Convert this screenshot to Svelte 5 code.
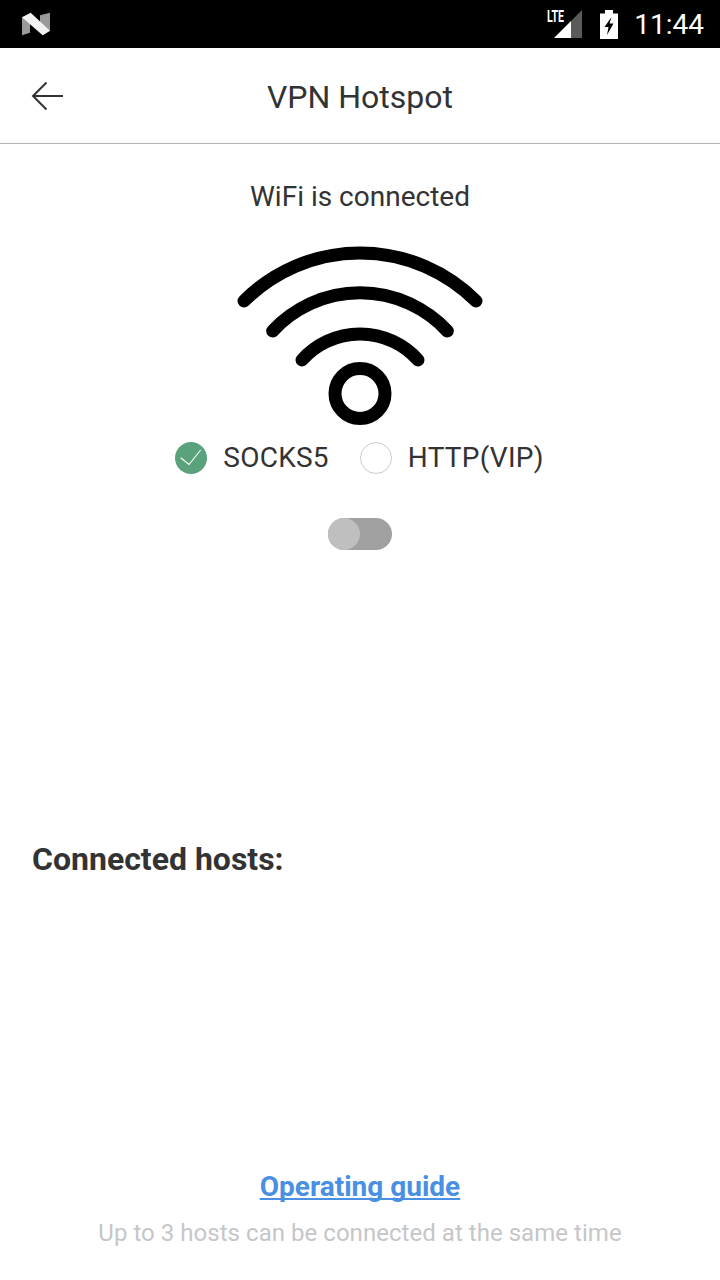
<script>
  let socks = $state(true);
</script>

<div class="page">
  <div class="status">
    <svg class="n" width="28" height="24" viewBox="66 36 84 72">
      <path d="M66 52 L90 44 L90 98 L66 106 Z" fill="#9a9a9a"/>
      <path d="M120 46 L150 38 L150 92 L128 106 L120 90 Z" fill="#9a9a9a"/>
      <path d="M66 52 L92 38 L150 92 L128 106 Z" fill="#f2f2f2"/>
    </svg>
    <div class="right">
      <svg class="sig" width="36" height="32" viewBox="0 0 36 32">
        <path d="M7 30 L24 13 L24 30 Z" fill="#fff"/>
        <path d="M24 13 L35 2 L35 30 L24 30 Z" fill="#5a5a5a"/>
        <text x="0" y="14" class="lte" textLength="17" lengthAdjust="spacingAndGlyphs">LTE</text>
      </svg>
      <svg class="bat" width="18" height="29" viewBox="0 0 18 29">
        <path d="M5 0 H13 V3.5 H18 V29 H0 V3.5 H5 Z" fill="#fff"/>
        <path d="M11.5 7 L4.5 17 H8.5 L7 25 L13.5 13.5 H9.5 Z" fill="#000"/>
      </svg>
      <span class="time">11:44</span>
    </div>
  </div>

  <header class="bar">
    <button class="back" aria-label="Back">
      <svg width="34" height="30" viewBox="0 0 34 30">
        <path d="M1.5 15 H32 M15.5 1.5 L2 15 L15.5 28.5" fill="none" stroke="#333" stroke-width="2"/>
      </svg>
    </button>
    <h1>VPN Hotspot</h1>
  </header>

  <main>
    <p class="state">WiFi is connected</p>

    <svg class="wifi" width="280" height="200" viewBox="0 0 280 200">
      <g fill="none" stroke="#000" stroke-width="13" stroke-linecap="round">
        <path d="M24 71 A164 164 0 0 1 256 71"/>
        <path d="M52.7 101 A119 119 0 0 1 227.3 101"/>
        <path d="M82 130 A77.7 77.7 0 0 1 198 130"/>
        <circle cx="140" cy="163.5" r="25" stroke-width="13"/>
      </g>
    </svg>

    <div class="choices">
      <button class="choice" onclick={() => (socks = true)}>
        <span class="radio" class:on={socks}>
          {#if socks}
            <svg width="32" height="32" viewBox="0 0 32 32">
              <path d="M5.7 15.7 L14 22.5 L25.7 8" fill="none" stroke="#fff" stroke-width="1.1"/>
            </svg>
          {/if}
        </span>
        SOCKS5
      </button>
      <button class="choice" onclick={() => (socks = false)}>
        <span class="radio" class:on={!socks}>
          {#if !socks}
            <svg width="32" height="32" viewBox="0 0 32 32">
              <path d="M5.7 15.7 L14 22.5 L25.7 8" fill="none" stroke="#fff" stroke-width="1.1"/>
            </svg>
          {/if}
        </span>
        HTTP(VIP)
      </button>
    </div>

    <div class="toggle"><span class="knob"></span></div>

    <h2>Connected hosts:</h2>
  </main>

  <footer>
    <a href="#guide">Operating guide</a>
    <p>Up to 3 hosts can be connected at the same time</p>
  </footer>
</div>

<style>
  :global(body) {
    margin: 0;
    background: #fff;
  }
  .page {
    width: 720px;
    height: 1280px;
    display: flex;
    flex-direction: column;
    font-family: Roboto, sans-serif;
    color: #333;
    background: #fff;
  }
  .status {
    height: 48px;
    background: #000;
    display: flex;
    align-items: center;
    justify-content: space-between;
    padding: 0 16px 0 22px;
    flex: none;
  }
  .n {
    display: block;
  }
  .right {
    display: flex;
    align-items: center;
  }
  .sig {
    margin-right: 17px;
    display: block;
  }
  .lte {
    font: 700 16px Roboto, sans-serif;
    fill: #fff;
  }
  .bat {
    display: block;
    margin-right: 16px;
  }
  .time {
    color: #fff;
    font-size: 28px;
  }
  .bar {
    height: 95px;
    border-bottom: 1px solid #b4b4b4;
    display: flex;
    align-items: center;
    justify-content: center;
    position: relative;
    flex: none;
  }
  .back {
    position: absolute;
    left: 31px;
    top: 33px;
    padding: 0;
    border: 0;
    background: none;
    display: block;
  }
  .back svg {
    display: block;
  }
  h1 {
    margin: 0;
    font-size: 32px;
    font-weight: 400;
    padding-top: 2px;
  }
  main {
    flex: 1;
    display: flex;
    flex-direction: column;
    align-items: center;
  }
  .state {
    margin: 36px 0 0;
    font-size: 28px;
    line-height: 34px;
  }
  .wifi {
    display: block;
    margin-top: 16px;
  }
  .choices {
    display: flex;
    gap: 31px;
    margin-top: 11px;
    padding-right: 1px;
  }
  .choice {
    display: flex;
    align-items: center;
    gap: 16px;
    padding: 0;
    border: 0;
    background: none;
    font: inherit;
    font-size: 28px;
    letter-spacing: 0.25px;
    color: #333;
    line-height: 34px;
  }
  .radio {
    width: 32px;
    height: 32px;
    box-sizing: border-box;
    border-radius: 50%;
    border: 1px solid #ccc;
    display: block;
    position: relative;
    margin-top: -1px;
  }
  .radio.on {
    border: 0;
    background: #5aa27b;
  }
  .radio svg {
    display: block;
  }
  .toggle {
    width: 64px;
    height: 32px;
    border-radius: 16px;
    background: #a0a0a0;
    margin-top: 43px;
    position: relative;
  }
  .knob {
    position: absolute;
    left: 0;
    top: 0;
    width: 32px;
    height: 32px;
    border-radius: 50%;
    background: #bfbfbf;
  }
  h2 {
    align-self: flex-start;
    margin: 290px 0 0 32px;
    font-size: 32px;
    font-weight: 700;
    line-height: 38px;
  }
  footer {
    flex: none;
    height: 110px;
    display: flex;
    flex-direction: column;
    align-items: center;
    box-sizing: border-box;
  }
  footer a {
    color: #4a90e2;
    font-size: 28px;
    font-weight: 700;
    text-decoration: underline;
    text-decoration-skip-ink: none;
    line-height: 34px;
  }
  footer p {
    margin: 13px 0 0;
    color: #c6c6c8;
    font-size: 24px;
    letter-spacing: 0.04px;
    line-height: 32px;
  }
</style>
